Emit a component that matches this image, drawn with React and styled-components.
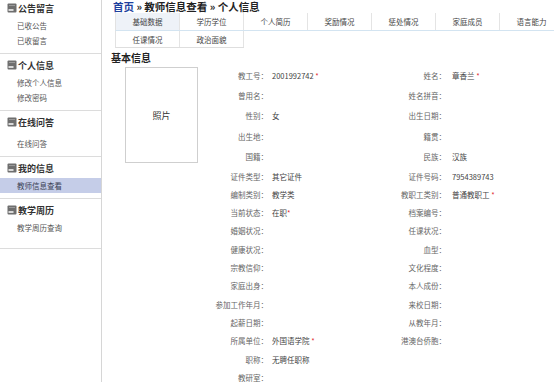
import styled, { createGlobalStyle } from 'styled-components';

const GlobalStyle = createGlobalStyle`
  html, body, #root {
    height: 100%;
  }
  body {
    margin: 0;
    overflow: hidden;
    background: #ffffff;
    font-family: "Noto Sans CJK SC", "Noto Sans", sans-serif;
  }
`;

const MENU = [
  { title: '公告留言', items: ['已收公告', '已收留言'], first: true },
  { title: '个人信息', items: ['修改个人信息', '修改密码'] },
  { title: '在线问答', items: ['在线问答'], gap: 6 },
  { title: '我的信息', items: ['教师信息查看'], active: 0 },
  { title: '教学周历', items: ['教学周历查询'], pb: 13 },
];

const TABS_TOP = ['基础数据', '学历学位', '个人简历', '奖励情况', '惩处情况', '家庭成员', '语言能力'];
const TABS_BOTTOM = ['任课情况', '政治面貌'];

// [label, value, required, tight star]
const LEFT = [
  ['教工号', '2001992742', true],
  ['曾用名'],
  ['性别', '女'],
  ['出生地'],
  ['国籍'],
  ['证件类型', '其它证件'],
  ['编制类别', '教学类'],
  ['当前状态', '在职', true, true],
  ['婚姻状况'],
  ['健康状况'],
  ['宗教信仰'],
  ['家庭出身'],
  ['参加工作年月'],
  ['起薪日期'],
  ['所属单位', '外国语学院', true],
  ['职称', '无聘任职称'],
  ['教研室'],
];

const RIGHT = [
  ['姓名', '章香兰', true],
  ['姓名拼音'],
  ['出生日期'],
  ['籍贯'],
  ['民族', '汉族'],
  ['证件号码', '7954389743'],
  ['教职工类别', '普通教职工', true],
  ['档案编号'],
  ['任课状况'],
  ['血型'],
  ['文化程度'],
  ['本人成份'],
  ['来校日期'],
  ['从教年月'],
  ['港澳台侨胞'],
];

const MenuIcon = () => (
  <svg width="10" height="10" viewBox="0 0 10 10">
    <rect x="0.5" y="0.5" width="9" height="9" rx="1" fill="#6e6e6e" />
    <rect x="2" y="2" width="6" height="1" fill="#9a9a9a" />
    <rect x="1.5" y="6" width="5" height="2" fill="#d8d8d8" />
  </svg>
);

const Field = ({ label, value, required, tight, col }) => (
  <>
    <Label $col={col}>{label}：</Label>
    <Value $col={col + 1} $pad={col === 2 ? 4 : 6}>
      {value}
      {required && <Star>{tight ? '*' : ' *'}</Star>}
    </Value>
  </>
);

const App = () => {
  const rows = LEFT.map((l, i) => ({ left: l, right: RIGHT[i] }));
  return (
    <>
      <GlobalStyle />
      <Page>
        <Sidebar>
          {MENU.map((sec) => (
            <Section key={sec.title} $first={sec.first} $pb={sec.pb}>
              <SectionHead>
                <MenuIcon />
                <span>{sec.title}</span>
              </SectionHead>
              <ItemList $gap={sec.gap}>
                {sec.items.map((it, i) => (
                  <Item key={it} $active={sec.active === i}>{it}</Item>
                ))}
              </ItemList>
            </Section>
          ))}
        </Sidebar>

        <Main>
          <Breadcrumb>
            <HomeLink>首页</HomeLink> » 教师信息查看 » 个人信息
          </Breadcrumb>

          <Tabs>
            <TabRow $line="#d3e4f1" $full>
              {TABS_TOP.map((t, i) => (
                <Tab key={t} $active={i === 0}>{t}</Tab>
              ))}
            </TabRow>
            <TabRow $line="#dedede">
              {TABS_BOTTOM.map((t) => (
                <Tab key={t}>{t}</Tab>
              ))}
            </TabRow>
          </Tabs>

          <Heading>基本信息</Heading>

          <FormGrid>
            <Photo>照片</Photo>
            {rows.map(({ left, right }) => (
              <Row key={left[0]} left={left} right={right} />
            ))}
          </FormGrid>
        </Main>
      </Page>
    </>
  );
};

const Row = ({ left, right }) => (
  <>
    <Field label={left[0]} value={left[1]} required={left[2]} tight={left[3]} col={2} />
    {right && (
      <Field label={right[0]} value={right[1]} required={right[2]} tight={right[3]} col={4} />
    )}
  </>
);

export default App;

const Page = styled.div`
  display: flex;
  height: 100vh;
  width: 100vw;
  overflow: hidden;
`;

const Sidebar = styled.nav`
  flex: 0 0 101px;
  border-right: 1px solid #d6d6d6;
`;

const Section = styled.div`
  padding-top: ${(p) => (p.$first ? 0 : 3)}px;
  padding-bottom: ${(p) => p.$pb ?? 5}px;
  border-bottom: 1px solid #dcdcdc;
`;

const SectionHead = styled.div`
  display: flex;
  align-items: center;
  height: 16px;
  padding-left: 7px;
  font-size: 9px;
  font-weight: bold;
  color: #333333;

  span {
    margin-left: 1px;
  }
`;

const ItemList = styled.div`
  margin-top: ${(p) => p.$gap ?? 2}px;
`;

const Item = styled.div`
  height: 15px;
  line-height: 15px;
  padding-left: 17px;
  font-size: 7.5px;
  color: ${(p) => (p.$active ? '#3a3f55' : '#555555')};
  background: ${(p) => (p.$active ? '#c5cde8' : 'transparent')};
`;

const Main = styled.main`
  flex: 1;
  min-width: 0;
  padding-left: 9px;
  overflow: hidden;
`;

const Breadcrumb = styled.div`
  height: 13px;
  line-height: 13px;
  padding-left: 2px;
  font-size: 10.5px;
  font-weight: bold;
  color: #222222;
  white-space: nowrap;
`;

const HomeLink = styled.span`
  color: #1d3f9e;
`;

const Tabs = styled.div`
  margin-left: 4px;
`;

const TabRow = styled.div`
  display: flex;
  width: ${(p) => (p.$full ? 'auto' : 'max-content')};
  height: ${(p) => (p.$full ? 17 : 16)}px;
  border-left: 1px solid #e2e2e2;
  border-bottom: 1px solid ${(p) => p.$line};
`;

const Tab = styled.div`
  flex: 0 0 64px;
  display: flex;
  align-items: center;
  justify-content: center;
  box-sizing: border-box;
  border-right: 1px solid #e4e4e4;
  background: ${(p) => (p.$active ? '#eef2f8' : 'transparent')};
  font-size: 7.5px;
  color: #444444;
  white-space: nowrap;
`;

const Heading = styled.h2`
  margin: 3px 0 0;
  height: 14px;
  line-height: 14px;
  font-size: 10px;
  font-weight: bold;
  color: #222222;
`;

const FormGrid = styled.div`
  display: grid;
  grid-template-columns: 94px 63px 106px 72px 1fr;
  grid-template-rows: repeat(5, 20.4px) repeat(12, 18.3px);
  align-items: center;
  font-size: 7.5px;
`;

const Photo = styled.div`
  grid-column: 1;
  grid-row: 1 / span 5;
  align-self: start;
  margin: 2px 0 0 14px;
  width: 73px;
  height: 96px;
  box-sizing: border-box;
  border: 1px solid #cfcfcf;
  display: flex;
  align-items: center;
  justify-content: center;
  font-size: 9px;
  color: #333333;
`;

const Label = styled.div`
  grid-column: ${(p) => p.$col};
  text-align: right;
  color: #666666;
  white-space: nowrap;
`;

const Value = styled.div`
  grid-column: ${(p) => p.$col};
  padding-left: ${(p) => p.$pad}px;
  color: #444444;
  white-space: pre;
`;

const Star = styled.span`
  color: #e0282e;
`;
